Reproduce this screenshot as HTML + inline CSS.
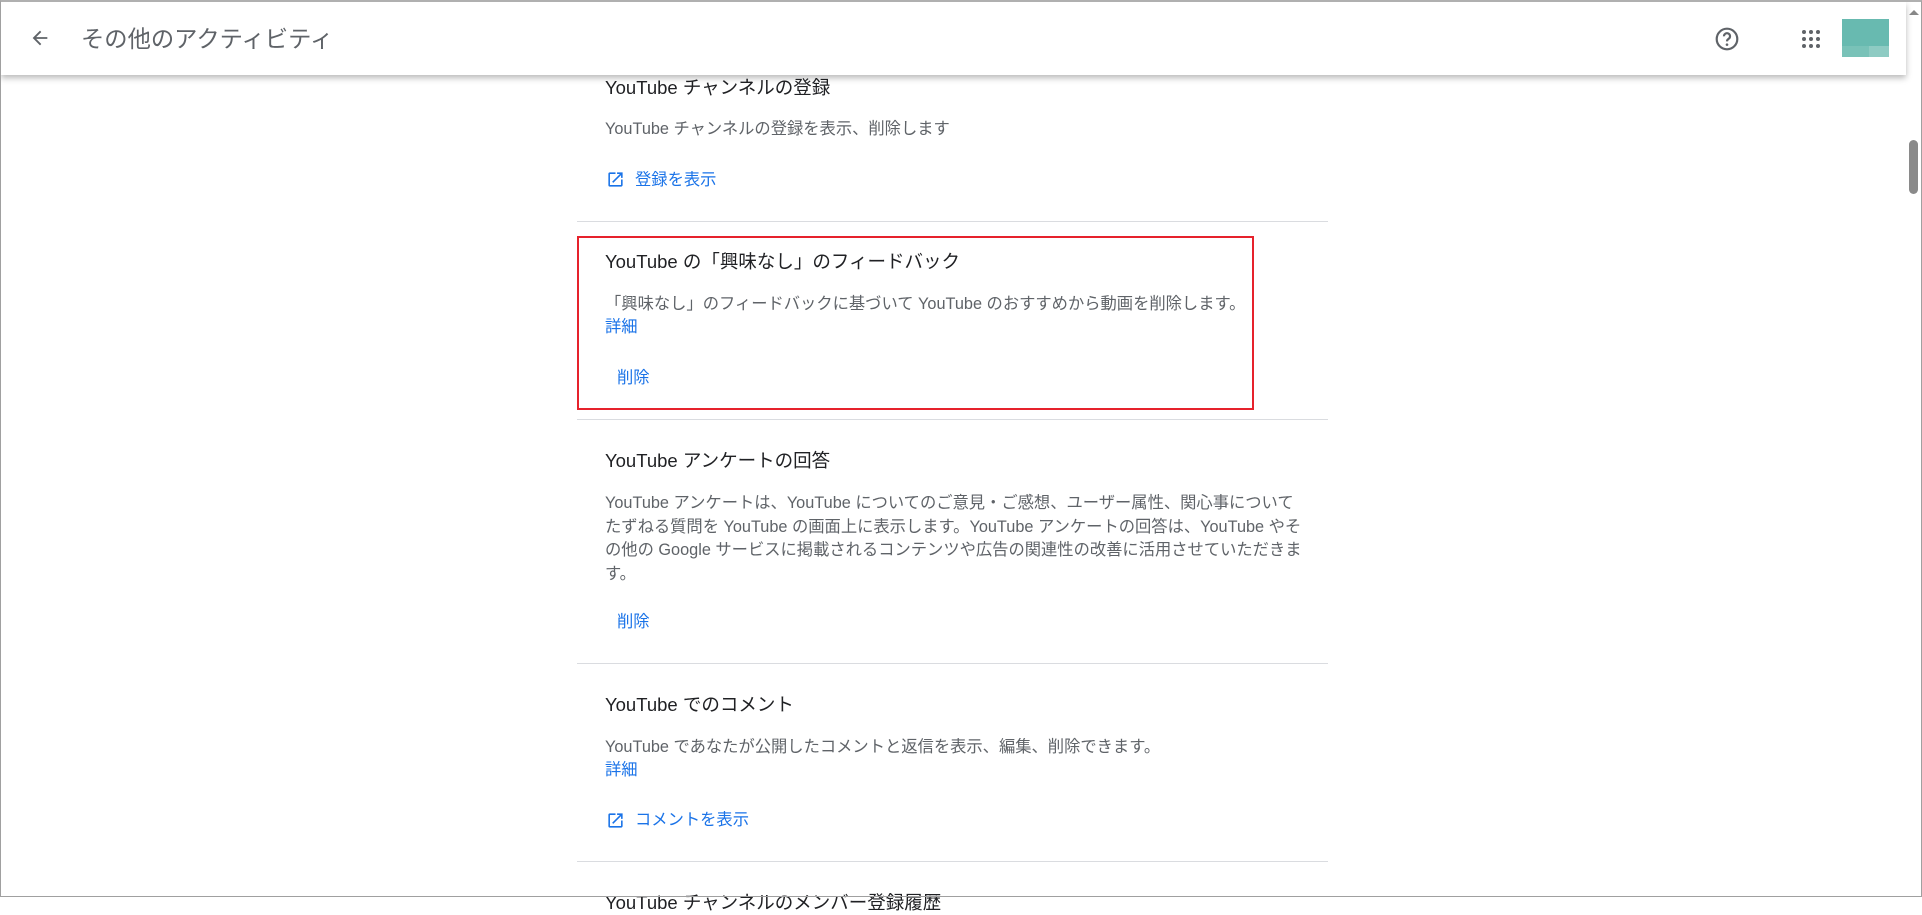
<!DOCTYPE html>
<html><head><meta charset="utf-8"><style>
*{margin:0;padding:0;box-sizing:border-box}
html,body{width:1922px;height:897px;overflow:hidden;background:#fff;font-family:"Liberation Sans","Noto Sans CJK JP",sans-serif}
.frame{position:absolute;left:0;top:0;width:1922px;height:897px;border:1px solid #a0a0a0;border-top:2px solid #b0b0b0;z-index:9;pointer-events:none}
.hdr{position:absolute;left:1px;top:2px;width:1905px;height:73px;background:#fff;box-shadow:0 3px 6px rgba(0,0,0,.28);z-index:5}
.hdr .t{position:absolute;left:80px;top:22px;font-size:23.3px;color:#5f6368;line-height:30px}
.abs{position:absolute}
.ti{position:absolute;left:605px;font-size:18.5px;color:#202124;line-height:24px}
.de{position:absolute;left:605px;font-size:16.3px;color:#5f6368;line-height:24px;white-space:nowrap}
.lk{position:absolute;font-size:16.3px;color:#1a73e8;line-height:24px}
.sep{position:absolute;left:577px;width:751px;height:1px;background:#dadce0}
.sb{position:absolute;left:1906px;top:2px;width:15px;height:894px;background:#fff}
</style></head><body>
<div class="frame"></div>
<div class="hdr">
<svg class="abs" style="left:28px;top:25px" width="22" height="22" viewBox="0 0 24 24"><path d="M20 11H7.83l5.590-5.59L12 4l-8 8 8 8 1.41-1.41L7.83 13H20v-2z" fill="#5f6368"/></svg>
<div class="t">その他のアクティビティ</div>
<svg class="abs" style="left:1713px;top:24px" width="26" height="26" viewBox="0 0 24 24"><circle cx="12" cy="12" r="9.5" fill="none" stroke="#5f6368" stroke-width="2"/><path d="M9.2 9.5a2.8 2.8 0 1 1 4.3 2.3c-1 .6-1.5 1.1-1.5 2.4" fill="none" stroke="#5f6368" stroke-width="2"/><circle cx="12" cy="17.2" r="1.2" fill="#5f6368"/></svg>
<svg class="abs" style="left:1800px;top:27px" width="20" height="20" viewBox="0 0 20 20" fill="#5f6368"><circle cx="3" cy="3" r="2"/><circle cx="10" cy="3" r="2"/><circle cx="17" cy="3" r="2"/><circle cx="3" cy="10" r="2"/><circle cx="10" cy="10" r="2"/><circle cx="17" cy="10" r="2"/><circle cx="3" cy="17" r="2"/><circle cx="10" cy="17" r="2"/><circle cx="17" cy="17" r="2"/></svg>
<div class="abs" style="left:1841px;top:17px;width:47px;height:38px;background:#68bab0"></div>
<div class="abs" style="left:1841px;top:44px;width:27px;height:11px;background:#79c2b8"></div>
<div class="abs" style="left:1868px;top:44px;width:20px;height:11px;background:#8ecbc3"></div>
</div>
<div class="sb"><div class="abs" style="left:3px;top:8px;width:0;height:0;border-left:5px solid transparent;border-right:5px solid transparent;border-bottom:5px solid #888"></div><div class="abs" style="left:3px;top:138px;width:9px;height:54px;border-radius:5px;background:#8a8a8a"></div></div>

<div class="ti" style="top:76px">YouTube チャンネルの登録</div>
<div class="de" style="top:117px">YouTube チャンネルの登録を表示、削除します</div>
<svg class="abs" style="left:606px;top:170px" width="19" height="19" viewBox="0 0 24 24"><path d="M19 19H5V5h7V3H5a2 2 0 0 0-2 2v14a2 2 0 0 0 2 2h14c1.1 0 2-.9 2-2v-7h-2v7zM14 3v2h3.59l-9.83 9.830 1.41 1.41L19 6.41V10h2V3h-7z" fill="#1a73e8"/></svg>
<div class="lk" style="left:635px;top:168px">登録を表示</div>
<div class="sep" style="top:221px"></div>

<div class="abs" style="left:577px;top:236px;width:677px;height:174px;border:2px solid #e6222c"></div>
<div class="ti" style="top:250px">YouTube の「興味なし」のフィードバック</div>
<div class="de" style="top:292px">「興味なし」のフィードバックに基づいて YouTube のおすすめから動画を削除します。</div>
<div class="lk" style="left:605px;top:315px">詳細</div>
<div class="lk" style="left:617px;top:366px">削除</div>
<div class="sep" style="top:419px"></div>

<div class="ti" style="top:449px">YouTube アンケートの回答</div>
<div class="de" style="top:492px;line-height:23.5px">YouTube アンケートは、YouTube についてのご意見・ご感想、ユーザー属性、関心事について<br>たずねる質問を YouTube の画面上に表示します。YouTube アンケートの回答は、YouTube やそ<br>の他の Google サービスに掲載されるコンテンツや広告の関連性の改善に活用させていただきま<br>す。</div>
<div class="lk" style="left:617px;top:610px">削除</div>
<div class="sep" style="top:663px"></div>

<div class="ti" style="top:693px">YouTube でのコメント</div>
<div class="de" style="top:735px">YouTube であなたが公開したコメントと返信を表示、編集、削除できます。</div>
<div class="lk" style="left:605px;top:758px">詳細</div>
<svg class="abs" style="left:606px;top:811px" width="19" height="19" viewBox="0 0 24 24"><path d="M19 19H5V5h7V3H5a2 2 0 0 0-2 2v14a2 2 0 0 0 2 2h14c1.1 0 2-.9 2-2v-7h-2v7zM14 3v2h3.59l-9.83 9.830 1.41 1.41L19 6.41V10h2V3h-7z" fill="#1a73e8"/></svg>
<div class="lk" style="left:635px;top:808px">コメントを表示</div>
<div class="sep" style="top:861px"></div>
<div class="ti" style="top:891px">YouTube チャンネルのメンバー登録履歴</div>
</body></html>
